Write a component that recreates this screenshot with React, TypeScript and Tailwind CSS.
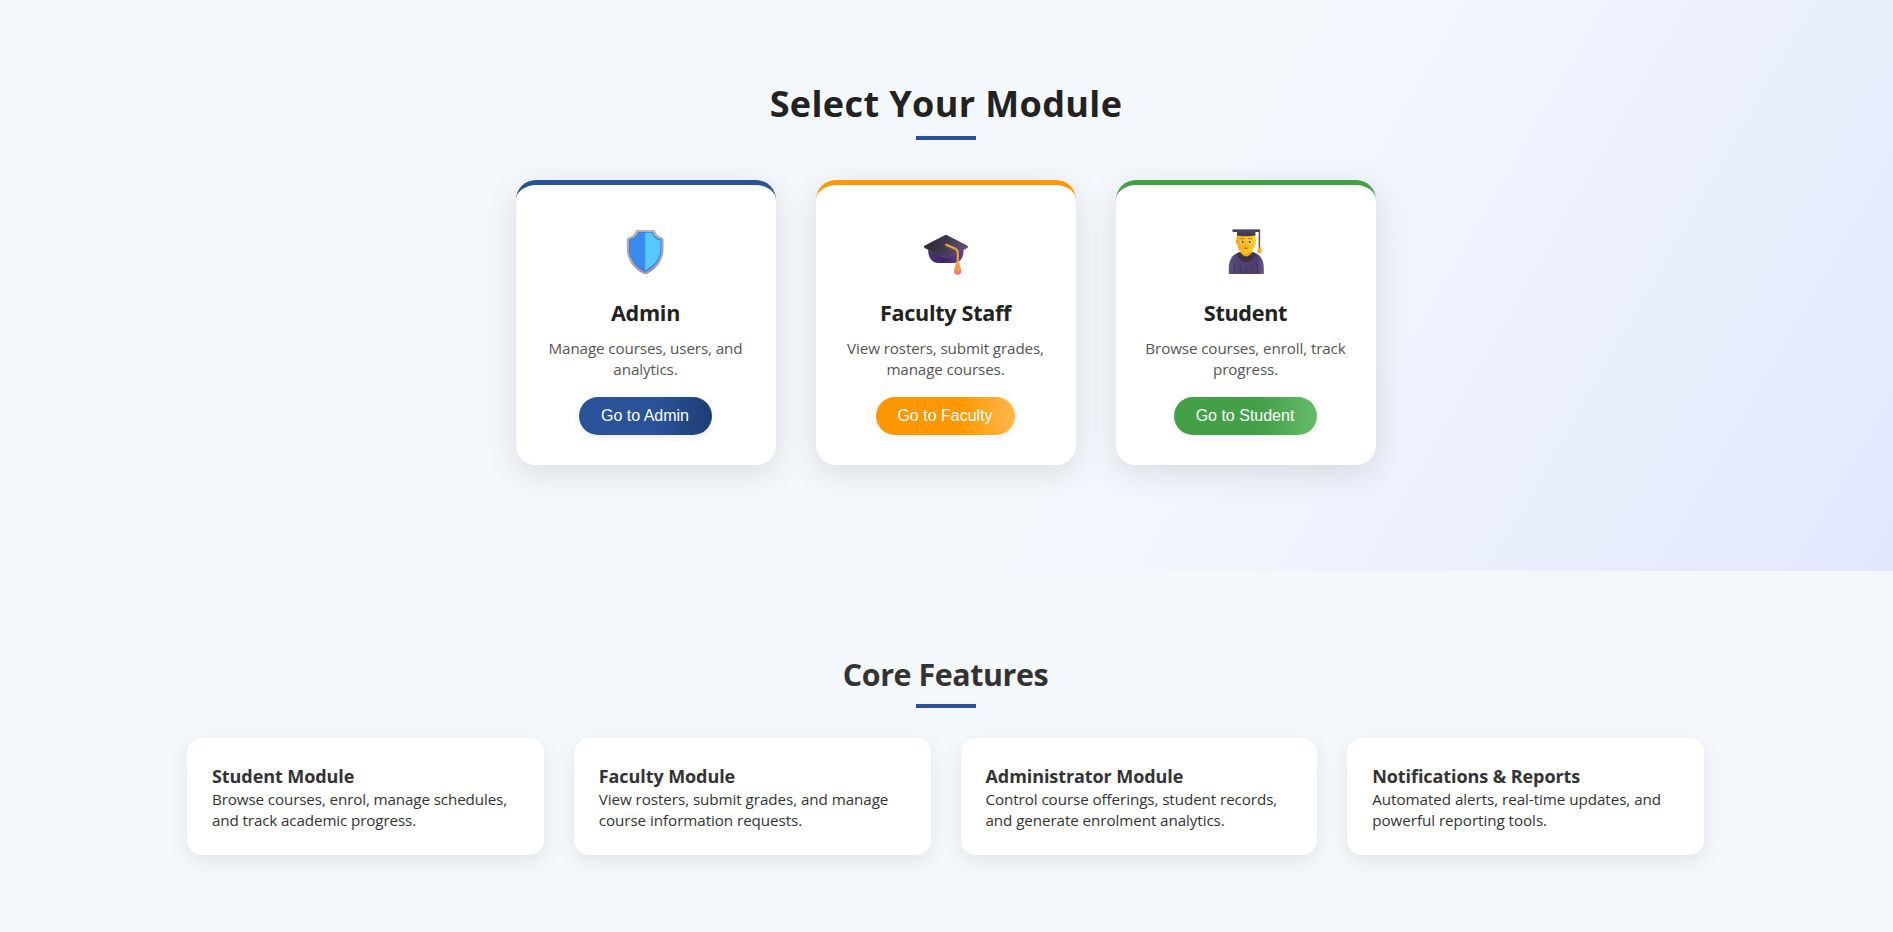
import type { ReactNode } from "react";

function ShieldIcon() {
  return (
    <svg viewBox="0 0 48 48" className="size-12" aria-hidden="true">
      <defs>
        <linearGradient id="shieldRim" x1="0" y1="0" x2="0" y2="1">
          <stop offset="0" stopColor="#b3afb8" />
          <stop offset="0.6" stopColor="#aba3b4" />
          <stop offset="1" stopColor="#a791b0" />
        </linearGradient>
      </defs>
      <path
        fill="url(#shieldRim)"
        d="M15.6 2H31.2C32.6 2 33.2 2.8 33.7 4.2C34.6 6.8 36.6 8.6 39.4 9.2C41 9.6 41.6 10.6 41.6 12V21C41.6 32.6 34 41.2 25.8 45.4C24.2 46.2 22.6 46.2 21 45.4C12.8 41.2 4.8 32.6 4.8 21V12C4.8 10.6 5.4 9.6 7 9.2C9.8 8.6 12 6.8 13 4.2C13.5 2.8 14.2 2 15.6 2Z"
      />
      <path
        fill="#3b7fdc"
        d="M16.2 4H30.8C31.6 7.6 34.4 10.4 39.4 11.6V21.4C39.4 31.4 32.4 39.4 23.4 44C14.4 39.4 7 31.4 7 21.4V11.6C12 10.4 15.2 7.6 16.2 4Z"
      />
      <path fill="#3a8bee" d="M17.2 5H23.4V42.4C14.8 37.8 8.2 30.8 8.2 21.4V12.6C13 11.4 16 8.8 17.2 5Z" />
      <path fill="#55c8ff" d="M23.2 4.8H30C31 8.8 34 11.4 38.4 12.6V21.4C38.4 30.8 31.8 37.8 23.2 42.4Z" />
    </svg>
  );
}

function CapIcon() {
  return (
    <svg viewBox="0 0 48 48" className="size-12" aria-hidden="true">
      <defs>
        <linearGradient id="capBoard" x1="0" y1="0.4" x2="1" y2="0.6">
          <stop offset="0" stopColor="#2a2733" />
          <stop offset="0.5" stopColor="#443a50" />
          <stop offset="1" stopColor="#66527d" />
        </linearGradient>
        <linearGradient id="capBase" x1="0" y1="0" x2="1" y2="0">
          <stop offset="0" stopColor="#4c3375" />
          <stop offset="0.45" stopColor="#3c2268" />
          <stop offset="1" stopColor="#644592" />
        </linearGradient>
        <linearGradient id="capTassel" x1="0" y1="0" x2="0" y2="1">
          <stop offset="0" stopColor="#f6ab4a" />
          <stop offset="0.6" stopColor="#fb9556" />
          <stop offset="1" stopColor="#fb6f6c" />
        </linearGradient>
      </defs>
      <path fill="url(#capBase)" d="M6.2 19H41.6V23C41.6 28.6 38.6 35 31.6 35H16.4C9.4 35 6.2 28.6 6.2 23Z" />
      <path
        fill="url(#capBoard)"
        d="M22.2 7.4C23.3 6.8 24.5 6.8 25.6 7.4L45.2 17.6C46.2 18.2 46.2 19.4 45.2 20L25.4 29.6C24.4 30.1 23.2 30.1 22.2 29.6L2.8 20C1.8 19.4 1.8 18.2 2.8 17.6Z"
      />
      <path fill="none" stroke="#6f5f80" strokeWidth="0.4" d="M3 20.2L22.2 29.7C23.2 30.2 24.4 30.2 25.4 29.7L45 20.2" />
      <path fill="none" stroke="#b9802f" strokeWidth="2.4" strokeLinecap="round" d="M24.2 17L33.6 21.2C35.2 22 35.7 23 35.7 24.8V36" />
      <path fill="none" stroke="#e9a63c" strokeWidth="1.7" strokeLinecap="round" d="M24.4 16.6L33.8 20.8C35.4 21.6 35.8 22.8 35.8 24.6V36" />
      <path
        fill="url(#capTassel)"
        d="M33.6 35C33.6 33.6 37.8 33.6 37.8 35L37.6 37.6C38.8 39.6 39.4 41.6 39.4 43.6C39.4 45.6 38 46.7 35.6 46.7C33.2 46.7 31.9 45.6 31.9 43.6C31.9 41.6 32.6 39.6 33.8 37.6Z"
      />
      <path stroke="#e88a3c" strokeWidth="0.7" d="M33.7 37.6H37.6" />
    </svg>
  );
}

function StudentIcon() {
  return (
    <svg viewBox="0 0 48 48" className="size-12" aria-hidden="true">
      <defs>
        <linearGradient id="studentFace" x1="0" y1="0" x2="1" y2="0">
          <stop offset="0" stopColor="#f9a51b" />
          <stop offset="0.4" stopColor="#fdbc1c" />
          <stop offset="1" stopColor="#ffd02b" />
        </linearGradient>
        <linearGradient id="studentGown" x1="0" y1="0" x2="1" y2="0">
          <stop offset="0" stopColor="#5f5280" />
          <stop offset="0.25" stopColor="#51426f" />
          <stop offset="0.8" stopColor="#4f3d70" />
          <stop offset="1" stopColor="#6a5a8a" />
        </linearGradient>
      </defs>
      <path fill="url(#studentGown)" d="M6.8 46V39.5C6.8 30.5 12.5 24.2 19 24.2H29.6C36.2 24.2 41.8 30.5 41.8 39.5V46Z" />
      <path stroke="#41325c" strokeWidth="0.9" d="M12.4 36V46M18.4 38V46M23.9 39V46M29.6 38V46M35.6 36V46" />
      <path fill="#3a3246" d="M15.2 26C17 24 19 23.6 24 23.6C29 23.6 31.4 24 33.2 26C32 31 28.4 34.2 24.2 34.2C20 34.2 16.4 31 15.2 26Z" />
      <path fill="#f7a818" d="M18.4 22H30V24.6C29 26.4 25.8 28.4 24.2 28.4C22.6 28.4 19.4 26.4 18.4 24.6Z" />
      <path
        fill="url(#studentFace)"
        d="M14.6 6H33.6V11.6C34.6 12.2 34.4 16 32.8 16.6C32.6 21.4 30 25.4 24.2 25.4C18.4 25.4 15.6 21.4 15.4 16.6C13.8 16 13.4 12.2 14.6 11.6Z"
      />
      <path fill="#463c52" d="M15 2.8H33.4V7.2C30 8.6 18.4 8.6 15 7.2Z" />
      <path fill="#4a3f5c" d="M10.4 1.8C10.4 1.4 10.8 1.2 11.2 1.2H37.4C37.9 1.2 38.2 1.4 38.2 1.8V3.2C38.2 3.6 37.9 3.9 37.4 3.9H11.2C10.8 3.9 10.4 3.6 10.4 3.2Z" />
      <path stroke="#a39ab0" strokeWidth="0.5" d="M11 1.5H37.6" />
      <path stroke="#5b4d70" strokeWidth="1.5" d="M37.4 3V20" />
      <path fill="#f3b025" d="M36.2 19.2H38.8L39.8 24.2C39.8 25.2 35.2 25.2 35.2 24.2Z" />
      <path fill="none" stroke="#b0602a" strokeWidth="0.9" strokeLinecap="round" d="M18.8 11.2C19.6 10.3 21 10.2 22 10.7M26.4 10.7C27.4 10.2 28.8 10.3 29.6 11.2" />
      <ellipse cx="20.2" cy="14.2" rx="1.7" ry="1.5" fill="#fff" />
      <ellipse cx="28.1" cy="14.2" rx="1.7" ry="1.5" fill="#fff" />
      <circle cx="20.6" cy="14.2" r="1.1" fill="#4d3440" />
      <circle cx="27.7" cy="14.2" r="1.1" fill="#4d3440" />
      <path fill="none" stroke="#e58a18" strokeWidth="0.8" strokeLinecap="round" d="M23.2 17.4C23.8 17.8 24.6 17.8 25.2 17.4" />
      <path fill="#c4382f" d="M21.6 19.4C23 19.9 25.4 19.9 26.8 19.4C26.2 21.2 22.2 21.2 21.6 19.4Z" />
    </svg>
  );
}

type Module = {
  title: string;
  text: string;
  action: string;
  icon: ReactNode;
  border: string;
  button: string;
};

const modules: Module[] = [
  {
    title: "Admin",
    text: "Manage courses, users, and analytics.",
    action: "Go to Admin",
    icon: <ShieldIcon />,
    border: "border-[#2a5298]",
    button: "w-[133px] bg-[linear-gradient(90deg,#2a5298_60%,#1e3c72_100%)]",
  },
  {
    title: "Faculty Staff",
    text: "View rosters, submit grades, manage courses.",
    action: "Go to Faculty",
    icon: <CapIcon />,
    border: "border-[#ff9800]",
    button: "w-[139px] bg-[linear-gradient(90deg,#ff9800_60%,#ffb74d_100%)]",
  },
  {
    title: "Student",
    text: "Browse courses, enroll, track progress.",
    action: "Go to Student",
    icon: <StudentIcon />,
    border: "border-[#43a047]",
    button: "w-[143px] bg-[linear-gradient(90deg,#43a047_60%,#66bb6a_100%)]",
  },
];

const features = [
  { title: "Student Module", text: "Browse courses, enrol, manage schedules, and track academic progress.", tracking: "tracking-[-0.12px]" },
  { title: "Faculty Module", text: "View rosters, submit grades, and manage course information requests.", tracking: "tracking-[-0.06px]" },
  { title: "Administrator Module", text: "Control course offerings, student records, and generate enrolment analytics.", tracking: "tracking-[-0.08px]" },
  { title: "Notifications & Reports", text: "Automated alerts, real-time updates, and powerful reporting tools.", tracking: "tracking-[-0.05px]" },
];

function ModuleCard({ title, text, action, icon, border, button }: Module) {
  return (
    <article
      className={`flex h-[285px] w-[260px] flex-col items-center rounded-[20px] border-t-[5px] bg-white px-6 pt-[43px] text-center shadow-[0_8px_32px_rgba(0,0,0,0.11)] ${border}`}
    >
      {icon}
      <h3 className="mt-[22px] pr-px text-[21.6px] leading-[30px] font-bold tracking-[-0.3px] text-[#222]">{title}</h3>
      <p className="mt-2.5 pr-px text-[15.2px] leading-[21px] tracking-[-0.11px] text-[#555]">{text}</p>
      <button
        type="button"
        className={`mt-[17px] mr-0.5 h-[38px] rounded-full font-['Liberation_Sans',Arial,sans-serif] text-base font-normal whitespace-nowrap text-white shadow-[0_2px_8px_rgba(0,0,0,0.07)] ${button}`}
      >
        {action}
      </button>
    </article>
  );
}

export default function App() {
  return (
    <div className="min-h-screen bg-[#f4f8fd] font-['Open_Sans','Noto_Sans',sans-serif]">
      <section className="flex h-[571px] flex-col items-center bg-[linear-gradient(120deg,#f4f8fd_60%,#e2e8fc_100%)] pt-20 pr-px">
        <h1 className="text-[36px] leading-[48px] font-bold tracking-[0.38px] text-[#222]">Select Your Module</h1>
        <div className="mt-2 mb-10 h-1 w-[60px] bg-[#2a5298]" />
        <div className="flex gap-10">
          {modules.map((m) => (
            <ModuleCard key={m.title} {...m} />
          ))}
        </div>
      </section>

      <section className="flex flex-col items-center pt-[83px] pr-0.5">
        <h2 className="text-[30.4px] leading-[42px] font-bold tracking-[-0.42px] text-[#333]">Core Features</h2>
        <div className="mt-2 mb-[30px] ml-px h-1 w-[60px] bg-[#2a5298]" />
        <div className="grid w-[1517px] grid-cols-4 gap-[30px]">
          {features.map((f) => (
            <article
              key={f.title}
              className="h-[117px] rounded-[15px] bg-white px-[25px] py-[25px] text-[#333] shadow-[0_6px_20px_rgba(0,0,0,0.08)]"
            >
              <h3 className="text-lg leading-[26px] font-bold tracking-[-0.08px]">{f.title}</h3>
              <p className={`text-[15.2px] leading-[21px] ${f.tracking}`}>{f.text}</p>
            </article>
          ))}
        </div>
      </section>
    </div>
  );
}
